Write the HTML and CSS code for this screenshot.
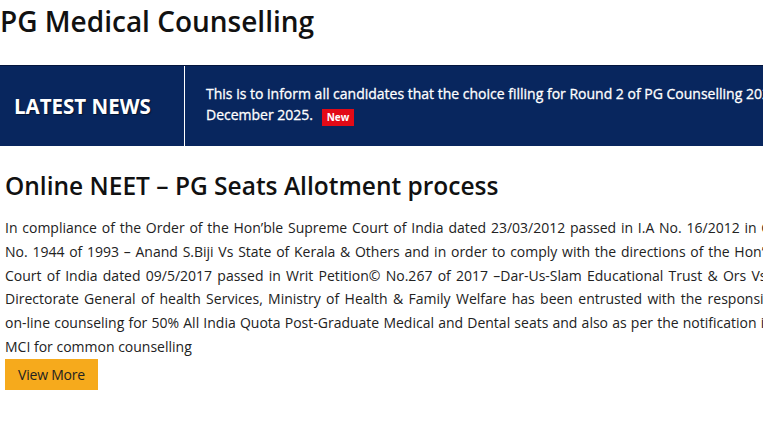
FILE: index.html
```html
<!DOCTYPE html>
<html lang="en">
<head>
<meta charset="utf-8">
<title>PG Medical Counselling</title>
<link rel="stylesheet" href="styles.css">
</head>
<body>
<div class="page">
  <h1 class="site-title">PG Medical Counselling</h1>
  <div class="news">
    <div class="news-label">LATEST NEWS</div>
    <div class="news-text">This is to inform all candidates that the choice filling for Round 2 of PG Counselling 2025 will end on 12th December 2025. <span class="badge">New</span></div>
  </div>
  <div class="content">
    <h2 class="section-title">Online NEET – PG Seats Allotment process</h2>
    <p class="intro">In compliance of the Order of the Hon’ble Supreme Court of India dated 23/03/2012 passed in I.A No. 16/2012 in Civil Appeals, No. 1944 of 1993 – Anand S.Biji Vs State of Kerala &amp; Others and in order to comply with the directions of the Hon’ble Supreme Court of India dated 09/5/2017 passed in Writ Petition© No.267 of 2017 –Dar-Us-Slam Educational Trust &amp; Ors Vs UOI &amp; Ors., Directorate General of health Services, Ministry of Health &amp; Family Welfare has been entrusted with the responsibility to hold <span class="nowrap">on-line</span> counseling for 50% All India Quota <span class="nowrap">Post-Graduate</span> Medical and Dental seats and also as per the notification issued by the MCI for common counselling</p>
    <a class="btn" href="#">View More</a>
  </div>
</div>
</body>
</html>
```
FILE: styles.css
```css
html, body {
  margin: 0;
  padding: 0;
  overflow: hidden;
  background: #fff;
}
body {
  font-family: "Open Sans", "DejaVu Sans", sans-serif;
  color: #222;
}
.page {
  width: 920px;
}
.site-title {
  margin: 0;
  padding-top: 2px;
  font-size: 28px;
  font-weight: 600;
  line-height: 38px;
  color: #111;
}
.news {
  display: flex;
  margin-top: 25px;
  height: 81px;
  box-sizing: border-box;
  background: #08265e;
  border-top: 1px solid #03153d;
}
.news-label {
  display: flex;
  align-items: center;
  flex: 0 0 185px;
  box-sizing: border-box;
  padding-left: 14px;
  border-right: 1px solid #fff;
  color: #fff;
  font-size: 20.5px;
  font-weight: 700;
  text-shadow: 1px 1px 1px rgba(0, 0, 0, 0.5);
}
.news-text {
  flex: 1;
  padding: 17px 0 0 21px;
  color: #fff;
  font-size: 14px;
  font-weight: 400;
  line-height: 21px;
  -webkit-text-stroke: 0.3px #fff;
}
.badge {
  display: inline-block;
  margin-left: 5px;
  padding: 0 5px;
  background: #e20a16;
  color: #fff;
  font-size: 10px;
  font-weight: 700;
  line-height: 17px;
  vertical-align: -1px;
  -webkit-text-stroke: 0;
}
.content {
  padding: 0 5px;
}
.section-title {
  margin: 22px 0 0;
  font-size: 24.5px;
  font-weight: 600;
  line-height: 36px;
  color: #111;
}
.intro {
  width: 843px;
  margin: 12px 0 0;
  font-size: 14px;
  line-height: 1.7;
  text-align: justify;
}
.nowrap {
  white-space: nowrap;
}
.btn {
  display: inline-block;
  padding: 5px 13px;
  background: #f6aa1c;
  color: #222;
  font-size: 14px;
  letter-spacing: -0.2px;
  line-height: 21px;
  text-decoration: none;
}
```
